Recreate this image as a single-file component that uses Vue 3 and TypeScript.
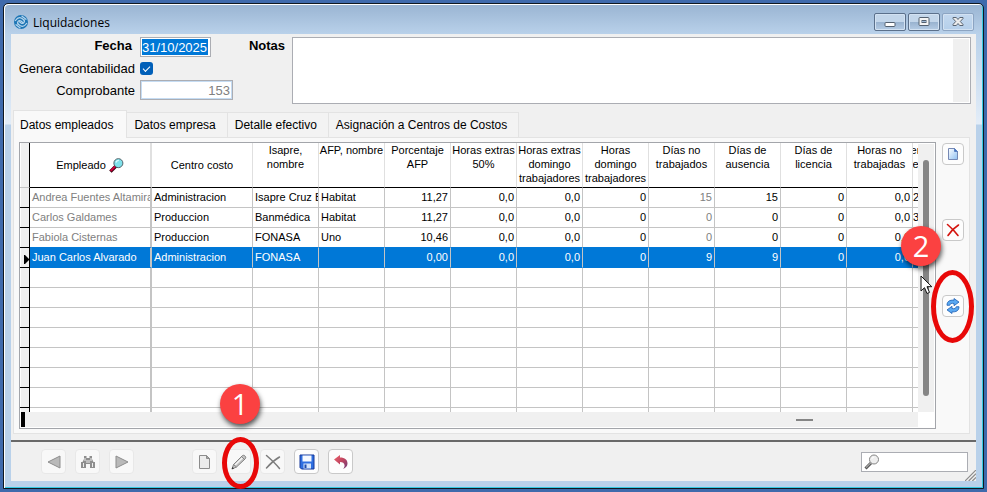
<script setup lang="ts">
import { ref } from 'vue'

interface Column {
  title: string
  kind: 'name' | 'cost' | 'text' | 'number' | 'cut'
  muted?: boolean
}

const columns: Column[] = [
  { title: 'Empleado', kind: 'name', muted: true },
  { title: 'Centro costo', kind: 'cost' },
  { title: 'Isapre, nombre', kind: 'text' },
  { title: 'AFP, nombre', kind: 'text' },
  { title: 'Porcentaje AFP', kind: 'number' },
  { title: 'Horas extras 50%', kind: 'number' },
  { title: 'Horas extras domingo trabajadores', kind: 'number' },
  { title: 'Horas domingo trabajadores', kind: 'number' },
  { title: 'Días no trabajados', kind: 'number', muted: true },
  { title: 'Días de ausencia', kind: 'number' },
  { title: 'Días de licencia', kind: 'number' },
  { title: 'Horas no trabajadas', kind: 'number' },
  { title: 'er e', kind: 'cut' },
]

const rows: string[][] = [
  ['Andrea Fuentes Altamira', 'Administracion', 'Isapre Cruz B', 'Habitat', '11,27', '0,0', '0,0', '0', '15', '15', '0', '0,0', '2'],
  ['Carlos Galdames', 'Produccion', 'Banmédica', 'Habitat', '11,27', '0,0', '0,0', '0', '0', '0', '0', '0,0', '3'],
  ['Fabiola Cisternas', 'Produccion', 'FONASA', 'Uno', '10,46', '0,0', '0,0', '0', '0', '0', '0', '0,0', ''],
  ['Juan Carlos Alvarado', 'Administracion', 'FONASA', '', '0,00', '0,0', '0,0', '0', '9', '9', '0', '0,0', ''],
]
const emptyRows = 8
const selected = ref(3)

const tabs = ['Datos empleados', 'Datos empresa', 'Detalle efectivo', 'Asignación a Centros de Costos']
const activeTab = ref(0)

const fecha = ref('31/10/2025')
const contabilidad = ref(true)
const comprobante = ref('153')
const notas = ref('')
const busqueda = ref('')
</script>

<template>
  <div class="desktop">
    <main class="window">
      <header class="titlebar">
        <svg class="logo" viewBox="0 0 14 14" aria-hidden="true">
          <circle cx="7" cy="7" r="7" fill="#1c75b5" />
          <g fill="none" stroke="#b5d4ec" stroke-width="1.3" stroke-linecap="round">
            <path d="M1.500 5.500C3.500 2.500 6 2.200 8 3.500L10 5" />
            <path d="M12.500 8.500C10.500 11.500 8 11.800 6 10.500L4 9" />
            <path d="M4 9C2.800 7.500 4.500 4.500 7 6L9 7.800" />
            <path d="M10 5C11.200 6.500 9.500 9.500 7 8L5.500 6.800" />
            <path d="M8 1.200L12 4.200M2 9.800L6 12.800" />
          </g>
        </svg>
        <h1>Liquidaciones</h1>
        <div class="controls">
          <button type="button" aria-label="Minimizar">
            <svg viewBox="0 0 12 12"><rect x="1" y="6.500" width="10" height="4" rx="1" fill="#fff" stroke="#53606f" /></svg>
          </button>
          <button type="button" aria-label="Maximizar">
            <svg viewBox="0 0 12 12"><rect x="1" y="1.500" width="10" height="8" rx="1" fill="#f4f4f4" stroke="#53606f" /><rect x="4" y="4.500" width="4" height="2" fill="#9db8d5" stroke="#53606f" /></svg>
          </button>
          <button type="button" class="faded" aria-label="Cerrar">
            <svg viewBox="0 0 12 12"><path d="M1 1.500h3.300L6 3.500l1.700-2H11v1L8.300 5.500 11 8.500v1H7.700L6 7.500l-1.700 2H1v-1l2.700-3L1 2.500z" fill="#ececec" stroke="#596472" stroke-linejoin="round" /></svg>
          </button>
        </div>
      </header>

      <section class="content">
        <form class="form" @submit.prevent>
          <div class="fields">
            <label class="strong" for="fecha">Fecha</label>
            <input id="fecha" v-model="fecha" class="date" type="text" />
            <label for="contabilidad">Genera contabilidad</label>
            <input id="contabilidad" v-model="contabilidad" class="check" type="checkbox" />
            <label for="comprobante">Comprobante</label>
            <input id="comprobante" v-model="comprobante" class="voucher" type="text" readonly />
          </div>
          <label class="notes-label" for="notas">Notas</label>
          <textarea id="notas" v-model="notas" class="notes"></textarea>
        </form>

        <nav class="tabs" role="tablist">
          <button
            v-for="(tab, i) in tabs"
            :key="tab"
            type="button"
            role="tab"
            :aria-selected="i === activeTab"
            :class="{ active: i === activeTab }"
            @click="activeTab = i"
          >{{ tab }}</button>
        </nav>

        <div class="panel">
          <div class="grid-box">
            <div class="grid-top">
              <div class="viewport">
                <table>
                  <colgroup>
                    <col class="w-gutter" />
                    <col v-for="(c, i) in columns" :key="i" :class="'w-' + c.kind" />
                  </colgroup>
                  <thead>
                    <tr>
                      <td class="gutter"></td>
                      <th v-for="(c, i) in columns" :key="i" scope="col" :class="c.kind">
                        <span class="head">
                          {{ c.title }}
                          <svg v-if="i === 0" class="lens" viewBox="0 0 16 16" aria-hidden="true">
                            <path d="M1.500 14.500L7.500 8.500" stroke="#3a0012" stroke-width="3.600" />
                            <path d="M1.800 13.800L7 8.600" stroke="#d6003c" stroke-width="2" />
                            <circle cx="10" cy="5.500" r="4.800" fill="#7fe0ea" stroke="#4a5a60" />
                            <path d="M7.500 5a3 3 0 0 1 3-2.500" stroke="#d9fbff" stroke-width="1.200" fill="none" />
                          </svg>
                        </span>
                      </th>
                    </tr>
                  </thead>
                  <tbody>
                    <tr
                      v-for="(row, r) in rows"
                      :key="r"
                      :class="{ selected: r === selected, above: r === selected - 1 }"
                      @click="selected = r"
                    >
                      <td class="gutter">
                        <svg v-if="r === selected" class="marker" viewBox="0 0 5 9" aria-hidden="true"><path d="M0 0h1l4 4v1L1 9H0z" /></svg>
                      </td>
                      <td v-for="(c, i) in columns" :key="i" :class="[c.kind, { muted: c.muted }]">{{ row[i] }}</td>
                    </tr>
                    <tr v-for="n in emptyRows" :key="'e' + n">
                      <td class="gutter"></td>
                      <td v-for="(c, i) in columns" :key="i" :class="c.kind"></td>
                    </tr>
                  </tbody>
                </table>
              </div>
              <div class="vscroll"><div class="vthumb"></div></div>
            </div>
            <div class="grid-bottom">
              <div class="hscroll"><div class="splitter"></div><div class="hthumb"></div></div>
            </div>
          </div>

          <div class="side">
            <button type="button" class="icon-btn small" aria-label="Nuevo">
              <svg viewBox="0 0 16 16">
                <defs><linearGradient id="page" x1="0" y1="0" x2="1" y2="1"><stop offset="0" stop-color="#fff" /><stop offset="1" stop-color="#8fc0f2" /></linearGradient></defs>
                <path d="M3.500 2.500h6l3 3v8h-9z" fill="url(#page)" stroke="#7688b4" /><path d="M9.500 2.500v3h3z" fill="#3f78c8" stroke="#5b7fc0" />
              </svg>
            </button>
            <button type="button" class="icon-btn small" aria-label="Eliminar">
              <svg viewBox="0 0 16 16"><path d="M2.500 2.500C6 5.500 10 9.500 13 13.500M13.500 3C9.500 5.500 5.500 9.500 3 13.500" fill="none" stroke="#d4150f" stroke-width="1.600" stroke-linecap="round" /></svg>
            </button>
            <div class="callout">
              <button type="button" class="icon-btn small" aria-label="Actualizar">
                <svg viewBox="0 0 16 16">
                  <g fill="#5aa9f2" stroke="#1f5fb4" stroke-width=".8" stroke-linejoin="round">
                    <path d="M2 7.300C1.800 3.500 5 1.700 9 2.200V.5l5 3.600L9 7.700V5.500C6.500 5 5 5.600 4.700 7.300z" />
                    <path d="M14 8.700c.2 3.800-3 5.600-7 5.100v1.700l-5-3.600 5-3.600v2.200c2.500.5 4-.1 4.300-1.800z" />
                  </g>
                </svg>
              </button>
              <div class="ring ring-two"></div>
              <div class="badge badge-two">2</div>
              <svg class="cursor" viewBox="0 0 13 20" aria-hidden="true"><path d="M1 1v15l3.500-3.300L7 18.500l2.500-1.100L7 11.700h4.800z" fill="#fff" stroke="#111" /></svg>
            </div>
          </div>
        </div>

        <footer class="toolbar">
          <div class="group">
            <button type="button" class="icon-btn flat" aria-label="Anterior">
              <svg viewBox="0 0 16 16"><path d="M14 2v12L2 8z" fill="#b9b9b9" stroke="#8d8d8d" /></svg>
            </button>
            <button type="button" class="icon-btn flat" aria-label="Buscar">
              <svg viewBox="0 0 16 16">
                <path d="M4 2h2.500v2H9.500V2H12v3l1.500 3H15v6h-5v-4H6v4H1V8h1.500L4 5z" fill="#8e8e8e" />
                <path d="M5 4v3M11 4v3M3.500 9v4M12.500 9v4M7 6v3M9 6v3" stroke="#ededed" />
              </svg>
            </button>
            <button type="button" class="icon-btn flat" aria-label="Siguiente">
              <svg viewBox="0 0 16 16"><path d="M2 2v12l12-6z" fill="#b9b9b9" stroke="#8d8d8d" /></svg>
            </button>
          </div>
          <div class="group">
            <button type="button" class="icon-btn flat" aria-label="Nuevo registro">
              <svg viewBox="0 0 16 16"><path d="M2.500 1.500h7l3 3v10h-10z" fill="#ececec" stroke="#8c8c8c" /><path d="M9.500 1.500v3h3z" fill="#a5a5a5" stroke="#8c8c8c" /></svg>
            </button>
            <div class="callout">
              <button type="button" class="icon-btn flat" aria-label="Editar">
                <svg viewBox="0 0 16 16">
                  <path d="M1 15l1.500-4.500L11 2c1-1 2-1 3 0s1 2 0 3l-8.500 8z" fill="#c4c4c4" stroke="#777" stroke-width=".9" />
                  <path d="M4 11L11.500 3.800" stroke="#f6f6f6" stroke-width="1.300" /><path d="M10.500 2.500l3 3M2.500 10.500l3 2.500" stroke="#777" stroke-width=".8" /><path d="M.7 15.300l.8-2.300 1.500 1.500z" fill="#333" />
                </svg>
              </button>
              <div class="ring ring-one"></div>
              <div class="badge badge-one">1</div>
            </div>
            <button type="button" class="icon-btn flat" aria-label="Borrar">
              <svg viewBox="0 0 16 16"><path d="M1.500 1.500C5.500 5 10.500 9.500 14.500 14.500M14.500 3C10 5.500 5 10 1.500 14" fill="none" stroke="#7c7c7c" stroke-width="1.500" stroke-linecap="round" /></svg>
            </button>
            <button type="button" class="icon-btn" aria-label="Guardar">
              <svg viewBox="0 0 16 16">
                <path d="M1 1h14v14H2.500L1 13.500z" fill="#2f6fe0" stroke="#16399a" /><rect x="3.500" y="1.500" width="9" height="6" fill="#f5f9ff" />
                <rect x="4.500" y="9.500" width="7.500" height="5" fill="#d5e4fa" /><rect x="5.500" y="10.500" width="2" height="3.500" fill="#1f4cae" />
              </svg>
            </button>
            <button type="button" class="icon-btn" aria-label="Deshacer">
              <svg viewBox="0 0 16 16">
                <defs><linearGradient id="undo" x1="0" y1="0" x2="1" y2="1"><stop offset="0" stop-color="#f0646c" /><stop offset=".5" stop-color="#c04560" /><stop offset="1" stop-color="#6a3a78" /></linearGradient></defs>
                <path d="M1 5.500L7 1v2.600c5 0 7.500 2.400 7.500 6 0 2.400-1.700 4.400-4.500 5.400 1.300-1.500 1.800-2.700 1.500-4C11.200 9 9.700 8 7 8v2.600z" fill="url(#undo)" />
              </svg>
            </button>
          </div>
          <label class="search">
            <svg viewBox="0 0 16 16" aria-hidden="true">
              <path d="M1.500 14.500L7 9" stroke="#555" stroke-width="3" /><path d="M2 13.700L7 8.700" stroke="#aaa" stroke-width="1.200" />
              <circle cx="10" cy="5.500" r="4.500" fill="#eee" stroke="#858585" /><path d="M7.800 5a2.500 2.500 0 0 1 2.500-2" stroke="#fff" fill="none" />
            </svg>
            <input v-model="busqueda" type="text" aria-label="Búsqueda" />
          </label>
          <svg class="grip" viewBox="0 0 12 12" aria-hidden="true"><path d="M0 12L12 0M4 12l8-8M8 12l4-4" stroke="#8a8a8a" stroke-width="1.300" /></svg>
        </footer>
      </section>
    </main>
  </div>
</template>

<style>
body {
  margin: 0;
}
</style>

<style scoped>
* {
  box-sizing: border-box;
}
.desktop {
  height: 100vh;
  padding: 3px;
  background: #3f6aac;
  font-family: 'Liberation Sans', Arial, sans-serif;
  font-size: 13px;
  color: #000;
  display: flex;
}
button,
input,
textarea {
  font: inherit;
  color: inherit;
  margin: 0;
  border-radius: 0;
  outline: none;
}
.window {
  flex: 1;
  min-width: 0;
  display: flex;
  flex-direction: column;
  border: 1px solid #101820;
  border-radius: 5px 5px 0 0;
  background: linear-gradient(#99b4d2, #b9d1ea 30px, #e3edf8 120px, #b9d1ea 121px);
  box-shadow: inset 1px 1px 0 #fff, inset -1px -1px 0 #35c9e2;
}
.titlebar {
  height: 30px;
  padding: 6px 9px 0 10px;
  display: flex;
  align-items: center;
  gap: 5px;
}
.logo {
  width: 14px;
  height: 14px;
}
h1 {
  margin: 0;
  flex: 1;
  font: 12px 'Open Sans', 'Noto Sans', sans-serif;
}
.controls {
  display: flex;
  gap: 2px;
}
.controls button {
  width: 32px;
  height: 18px;
  padding: 0;
  border: 1px solid #5b708b;
  border-radius: 2px;
  background: linear-gradient(#c3d6ea 50%, #98b2cf 50%, #b5cce5);
  box-shadow: inset 0 0 0 1px #d3e2f2;
  display: flex;
  align-items: center;
  justify-content: center;
}
.controls .faded {
  border-color: #8ca4c2;
  background: linear-gradient(#c3d8ef, #b5cfea);
}
.controls svg {
  width: 12px;
  height: 12px;
}
.content {
  flex: 1;
  min-height: 0;
  margin: 0 7px 7px;
  background: #f0f0f0;
  display: flex;
  flex-direction: column;
}
.form {
  display: flex;
  padding: 3px 5px 6px 0;
}
.fields {
  display: grid;
  grid-template-columns: 124px 93px;
  grid-template-rows: 20px 23px 20px;
  column-gap: 5px;
  align-items: center;
  text-align: right;
  white-space: nowrap;
}
.strong {
  font-weight: bold;
  padding: 0 3px 3px 0;
}
.date {
  width: 71px;
  height: 20px;
  padding: 1px 2px 1px 1px;
  border: 1px solid #abadb3;
  color: #fff;
  background: linear-gradient(#0078d7, #0078d7) content-box, #fff;
}
.check {
  appearance: none;
  width: 13px;
  height: 13px;
  border-radius: 3px;
  background: #005fb8;
  display: flex;
  justify-content: center;
  align-items: center;
}
.check:checked::after {
  content: '';
  width: 6px;
  height: 3px;
  border: solid #fff;
  border-width: 0 0 1px 1px;
  transform: translateY(-1px) rotate(-45deg);
}
.voucher {
  width: 93px;
  height: 20px;
  padding: 0 2px;
  border: 1px solid #abadb3;
  box-shadow: inset 0 0 0 1px #c5dcf3;
  color: #808080;
  text-align: right;
  background: #fff;
}
.notes-label {
  width: 52px;
  margin-right: 7px;
  font-weight: bold;
  line-height: 17px;
  text-align: right;
}
.notes {
  flex: 1;
  height: 67px;
  resize: none;
  border: 1px solid #abadb3;
  background: linear-gradient(#f0f0f0, #f0f0f0) no-repeat right 1px top 1px / 16px 63px, #fff;
}
.tabs {
  display: flex;
  align-items: flex-end;
  height: 27px;
  padding-left: 2px;
}
.tabs button {
  height: 25px;
  padding: 0 11px 0 7px;
  border: 1px solid #e3e3e3;
  border-width: 1px 1px 0 0;
  background: #f3f3f3;
  font-size: 12px;
  white-space: nowrap;
}
.tabs .active {
  height: 28px;
  margin-bottom: -1px;
  padding: 0 13px 0 6px;
  border-left-width: 1px;
  background: #f9f9f9;
  position: relative;
}
.panel {
  flex: 1;
  min-height: 0;
  margin: 0 6px 6px 2px;
  padding: 4px 5px;
  border: 1px solid #e3e3e3;
  background: #f9f9f9;
  display: flex;
  gap: 6px;
}
.grid-box {
  flex: 1;
  min-width: 0;
  border: 1px solid #a3a5aa;
  background: #fff;
  display: flex;
  flex-direction: column;
}
.grid-top {
  flex: 1;
  min-height: 0;
  display: flex;
}
.viewport {
  flex: 1;
  min-width: 0;
  overflow: hidden;
}
table {
  width: 100%;
  table-layout: fixed;
  border-collapse: separate;
  border-spacing: 0;
  font-size: 11px;
}
.w-gutter {
  width: 10px;
}
.w-name {
  width: 122px;
}
.w-cost {
  width: 101px;
}
.w-text,
.w-number {
  width: 66px;
}
.w-cut {
  width: auto;
}
th {
  height: 45px;
  padding: 0;
  border-right: 1px solid #e0e0e0;
  border-bottom: 1px solid #000;
  font-weight: normal;
  line-height: 14px;
  vertical-align: top;
  overflow: hidden;
}
th.name,
th.cost {
  vertical-align: middle;
}
.head {
  display: flex;
  justify-content: center;
  align-items: center;
  gap: 3px;
}
.lens {
  width: 15px;
  height: 15px;
}
td {
  height: 20px;
  padding: 0 2px;
  border-right: 1px solid #c4c4c4;
  border-bottom: 1px solid #c4c4c4;
  line-height: 19px;
  white-space: nowrap;
  overflow: hidden;
}
td.name {
  padding-right: 0;
}
.name {
  border-right-width: 2px;
}
.number {
  text-align: right;
}
th.number {
  text-align: center;
}
.cut,
th.cut {
  padding: 0;
  border-right: 0;
}
.muted {
  color: #808080;
}
td.gutter {
  padding: 0;
  border-right: 1px solid #000;
  border-bottom: 1px solid #000;
  background: linear-gradient(#f0f0f0, #f0f0f0) no-repeat 1px 0, #fff;
}
thead td.gutter {
  border-bottom-color: #c4c4c4;
}
.marker {
  display: block;
  width: 5px;
  height: 9px;
  margin: 4px 0 0 4px;
}
.selected td:not(.gutter) {
  background: #0078d7;
  border-bottom-color: #0078d7;
  color: #fff;
}
.above td:not(.gutter) {
  border-bottom-color: #0078d7;
}
.vscroll {
  width: 17px;
  border: solid #fff;
  border-width: 1px 1px 0 0;
  background: #f0f0f0;
  display: flex;
  justify-content: center;
  padding: 16px 0;
}
.vthumb {
  width: 6px;
  border-radius: 3px;
  background: #858585;
}
.grid-bottom {
  padding: 0 17px 1px 1px;
}
.hscroll {
  height: 15px;
  background: #f0f0f0;
  display: flex;
  align-items: center;
}
.splitter {
  width: 4px;
  height: 15px;
  background: #000;
}
.hthumb {
  width: 17px;
  height: 2px;
  margin-left: 86%;
  background: #858585;
}
.side {
  padding-top: 1px;
  display: flex;
  flex-direction: column;
  gap: 54px;
}
.icon-btn {
  width: 25px;
  height: 25px;
  padding: 0;
  border: 1px solid #c9c9c9;
  border-radius: 4px;
  background: #fdfdfd;
  display: flex;
  align-items: center;
  justify-content: center;
}
.icon-btn svg {
  width: 16px;
  height: 16px;
  flex: none;
}
.icon-btn.small {
  width: 22px;
  height: 22px;
}
.icon-btn.flat {
  border-color: #e8e8e8;
  background: #f8f8f8;
}
.callout {
  position: relative;
}
.ring {
  position: absolute;
  border: 5px solid #e80808;
  border-radius: 50%;
  pointer-events: none;
}
.ring-one {
  left: -4px;
  top: -12px;
  width: 37px;
  height: 52px;
}
.ring-two {
  left: -11px;
  top: -25px;
  width: 43px;
  height: 73px;
}
.badge {
  position: absolute;
  width: 40px;
  height: 40px;
  border-radius: 50%;
  background: #fb4141;
  box-shadow: 1px 3px 5px rgba(0, 0, 0, 0.65);
  color: #fff;
  font: 29px/40px 'Open Sans', 'Noto Sans', sans-serif;
  text-align: center;
}
.badge-one {
  left: -6px;
  top: -65px;
}
.badge-two {
  left: -41px;
  top: -69px;
}
.cursor {
  position: absolute;
  left: -22px;
  top: -20px;
  width: 13px;
  height: 20px;
}
.toolbar {
  border-top: 2px solid #696969;
  padding: 7px 8px 7px 30px;
  display: flex;
  align-items: center;
  gap: 58px;
  position: relative;
}
.group {
  display: flex;
  gap: 9px;
}
.search {
  width: 107px;
  height: 20px;
  margin-left: auto;
  padding-left: 2px;
  border: 1px solid #abadb3;
  background: #fff;
  display: flex;
  align-items: center;
}
.search svg {
  width: 16px;
  height: 16px;
}
.search input {
  flex: 1;
  min-width: 0;
  height: 16px;
  padding: 0 2px;
  border: 0;
  background: transparent;
}
.grip {
  position: absolute;
  right: 0;
  bottom: 0;
  width: 11px;
  height: 11px;
}
</style>
